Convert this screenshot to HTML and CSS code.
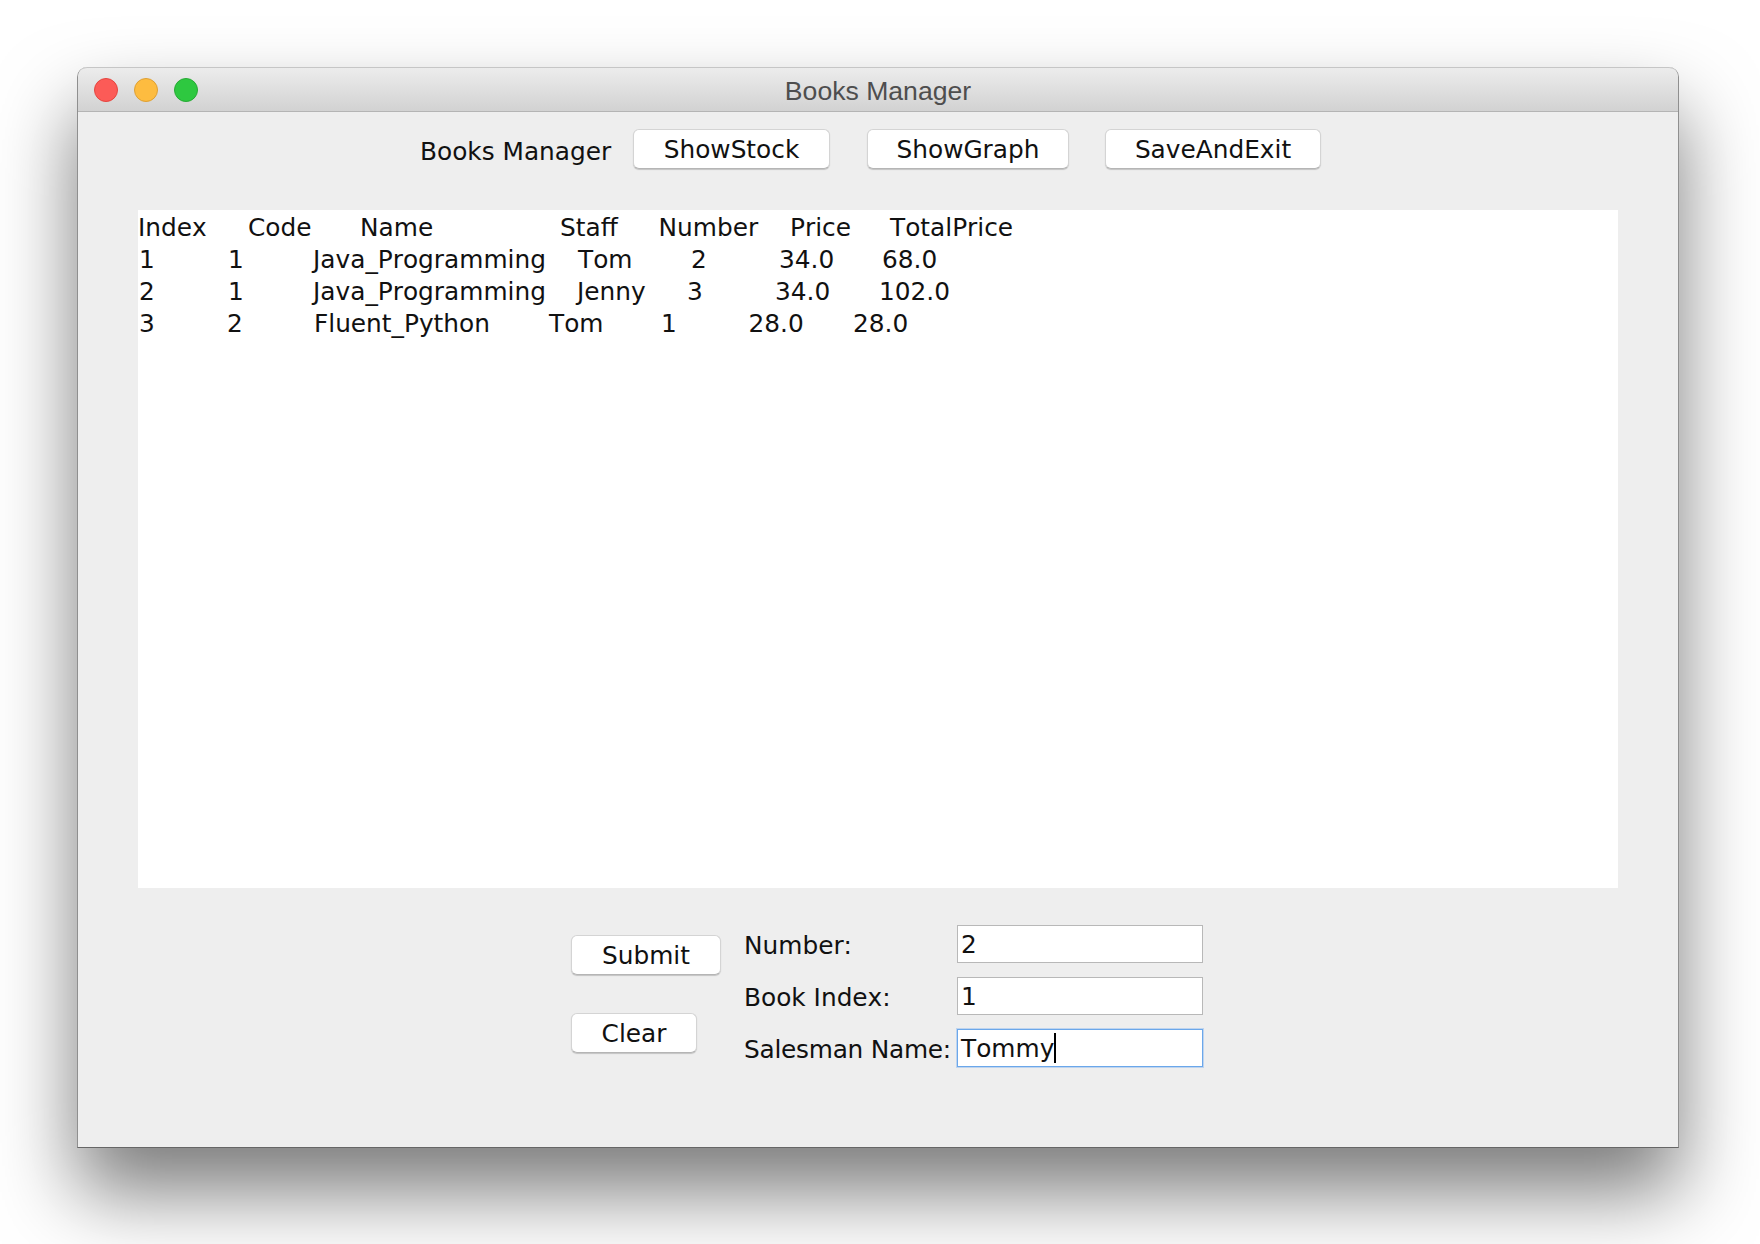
FILE: index.html
```html
<!DOCTYPE html>
<html lang="en">
<head>
<meta charset="utf-8">
<title>Books Manager</title>
<link rel="stylesheet" href="styles.css">
</head>
<body>
<main class="window">
  <header class="titlebar">
    <div class="lights">
      <span class="light red"></span>
      <span class="light yellow"></span>
      <span class="light green"></span>
    </div>
    <div class="title">Books Manager</div>
  </header>
  <section class="content">
    <div class="toolbar">
      <span class="toolbar-label">Books Manager</span>
      <button class="btn show-stock">ShowStock</button>
      <button class="btn show-graph">ShowGraph</button>
      <button class="btn save-exit">SaveAndExit</button>
    </div>
    <div class="output">
      <div class="row head"><span>Index</span><span>Code</span><span>Name</span><span>Staff</span><span>Number</span><span>Price</span><span>TotalPrice</span></div>
      <div class="row r1"><span>1</span><span>1</span><span>Java_Programming</span><span>Tom</span><span>2</span><span>34.0</span><span>68.0</span></div>
      <div class="row r2"><span>2</span><span>1</span><span>Java_Programming</span><span>Jenny</span><span>3</span><span>34.0</span><span>102.0</span></div>
      <div class="row r3"><span>3</span><span>2</span><span>Fluent_Python</span><span>Tom</span><span>1</span><span>28.0</span><span>28.0</span></div>
    </div>
    <div class="form">
      <div class="actions">
        <button class="btn submit">Submit</button>
        <button class="btn clear">Clear</button>
      </div>
      <div class="fields">
        <div class="field-row"><span class="field-label">Number:</span><div class="field">2</div></div>
        <div class="field-row"><span class="field-label">Book Index:</span><div class="field">1</div></div>
        <div class="field-row"><span class="field-label salesman">Salesman Name:</span><div class="field focused">Tommy<i class="caret"></i></div></div>
      </div>
    </div>
  </section>
</main>
</body>
</html>
```
FILE: styles.css
```css
* { box-sizing: border-box; }
html, body { margin: 0; height: 1244px; overflow: hidden; background: #fff; }
body {
  padding: 67px 81px 0 77px;
  font-family: "DejaVu Sans", sans-serif;
  font-size: 24.8px;
  font-kerning: none;
  color: #111;
}
.window {
  width: 1602px;
  height: 1081px;
  border-radius: 10px 10px 0 0;
  background: #eee;
  box-shadow: 0 44px 80px rgba(0,0,0,.52);
  border-left: 1px solid #8f8f8f;
  border-right: 1px solid #8f8f8f;
  border-bottom: 1px solid #666;
  overflow: hidden;
}
.titlebar {
  height: 45px;
  margin: 0 -1px;
  position: relative;
  display: flex;
  align-items: center;
  justify-content: center;
  background: linear-gradient(#ececec, #d2d2d2);
  border-top: 1px solid #c6c6c6;
  border-bottom: 1px solid #b4b4b4;
  border-radius: 10px 10px 0 0;
}
.lights {
  position: absolute;
  left: 17px;
  top: 10px;
  display: flex;
  gap: 16px;
}
.light { width: 24px; height: 24px; border-radius: 50%; border: 1px solid; }
.red { background: #fc5b57; border-color: #e5453f; }
.yellow { background: #fdbc40; border-color: #dea034; }
.green { background: #2ec840; border-color: #27aa35; }
.title {
  padding-top: 3px;
  font-family: "Liberation Sans", sans-serif;
  font-size: 26.6px;
  font-kerning: normal;
  color: #4e4e4e;
}
.toolbar {
  display: flex;
  align-items: center;
  height: 40px;
  margin-top: 17px;
  padding-left: 342px;
}
.toolbar-label { width: 213px; padding-top: 4px; }
.btn {
  height: 40px;
  padding: 0;
  font: inherit;
  font-kerning: none;
  color: #111;
  background: #fff;
  border: 1px solid #d4d4d4;
  border-bottom-color: #b5b5b5;
  border-radius: 6px;
  box-shadow: 0 1px 1px rgba(0,0,0,.18);
}
.show-stock { width: 197px; }
.show-graph { width: 202px; margin-left: 37px; }
.save-exit { width: 216px; margin-left: 36px; }
.output {
  height: 678px;
  margin: 41px 60px 0;
  padding-top: 2px;
  background: #fff;
}
.row { display: flex; height: 32px; line-height: 32px; white-space: pre; }
.row span { flex: none; }
.head { line-height: 31px; }
.head span:nth-child(1) { width: 110px; }
.head span:nth-child(2) { width: 112px; }
.head span:nth-child(3) { width: 200px; }
.head span:nth-child(4) { width: 98.5px; }
.head span:nth-child(5) { width: 131.5px; }
.head span:nth-child(6) { width: 100px; }
.r1 span:nth-child(1) { width: 89px; margin-left: 1px; }
.r1 span:nth-child(2) { width: 85px; }
.r1 span:nth-child(3) { width: 265px; }
.r1 span:nth-child(4) { width: 113px; }
.r1 span:nth-child(5) { width: 88px; }
.r1 span:nth-child(6) { width: 103px; }
.r2 span:nth-child(1) { width: 89px; margin-left: 1px; }
.r2 span:nth-child(2) { width: 85px; }
.r2 span:nth-child(3) { width: 264px; }
.r2 span:nth-child(4) { width: 110px; }
.r2 span:nth-child(5) { width: 88px; }
.r2 span:nth-child(6) { width: 104px; }
.r3 span:nth-child(1) { width: 88px; margin-left: 1px; }
.r3 span:nth-child(2) { width: 87px; }
.r3 span:nth-child(3) { width: 235px; }
.r3 span:nth-child(4) { width: 112px; }
.r3 span:nth-child(5) { width: 87.5px; }
.r3 span:nth-child(6) { width: 104.5px; }
.form {
  display: flex;
  margin-top: 37px;
  padding-left: 493px;
}
.actions {
  flex: none;
  width: 173px;
  padding-top: 10px;
  display: flex;
  flex-direction: column;
  align-items: flex-start;
  gap: 38px;
}
.actions .btn { flex: none; }
.submit { width: 150px; }
.clear { width: 126px; }
.fields { display: flex; flex-direction: column; gap: 14px; }
.field-row { display: flex; align-items: center; height: 38px; }
.field-label { width: 213px; padding-top: 2px; }
.salesman { letter-spacing: -.25px; }
.field {
  width: 246px;
  height: 38px;
  padding-left: 3px;
  line-height: 37px;
  background: #fff;
  border: 1px solid #b8b8b8;
  white-space: pre;
  display: flex;
}
.focused {
  border-color: #6ba7ea;
  box-shadow: 0 0 0 1px rgba(130,180,240,.45);
}
.caret { width: 2px; height: 30px; margin-top: 3px; background: #000; }
```
